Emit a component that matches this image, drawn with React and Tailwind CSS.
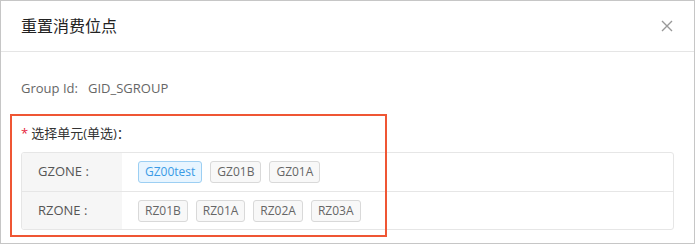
import React from "react";

const FONT = { fontFamily: '"Open Sans", "Noto Sans CJK SC", sans-serif' };

const zones = [
  { name: "GZONE", units: ["GZ00test", "GZ01B", "GZ01A"], active: "GZ00test" },
  { name: "RZONE", units: ["RZ01B", "RZ01A", "RZ02A", "RZ03A"] },
];

export default function App() {
  return (
    <div className="h-[245px] w-[695px] bg-white" style={FONT}>
      <div className="h-[244px] w-[695px] border border-[#c6c6c6] bg-white">
        {/* header */}
        <div className="flex h-[51px] items-center justify-between border-b border-[#e5e5e5] pl-[20px] pr-[21px]">
          <h1 className="text-[16px] text-[#222]">重置消费位点</h1>
          <svg width="12" height="12" viewBox="0 0 12 12" className="text-[#999]">
            <path d="M1 1 L11 11 M11 1 L1 11" stroke="currentColor" strokeWidth="1.4" />
          </svg>
        </div>

        {/* body */}
        <div className="relative pl-[20px] pr-[20px] pt-[27px]">
          <div className="text-[13px] leading-[18px] text-[#666]">
            Group Id:&nbsp;&nbsp; GID_SGROUP
          </div>

          <div className="mt-[27px] flex items-center text-[13px] leading-[18px] text-[#333]">
            <span className="mr-[3px] text-[#e6243c]">*</span>
            <span>选择单元(单选)：</span>
          </div>

          <div className="mt-[10px] overflow-hidden rounded-[3px] border border-[#e6e6e6]">
            {zones.map((z, i) => (
              <div
                key={z.name}
                className={`flex h-[38px] ${i > 0 ? "border-t border-[#e6e6e6]" : ""}`}
              >
                <div className="flex w-[100px] items-center bg-[#f6f6f6] pl-[16px] text-[13px] text-[#555]">
                  {z.name} :
                </div>
                <div className="flex items-center gap-[8px] pl-[16px]">
                  {z.units.map((u) => (
                    <span
                      key={u}
                      className={
                        u === z.active
                          ? "flex h-[22px] items-center rounded-[3px] border border-[#9ccff3] bg-[#e8f5ff] px-[6px] text-[12px] text-[#3a9be6]"
                          : "flex h-[22px] items-center rounded-[3px] border border-[#d9d9d9] bg-[#f8f8f8] px-[6px] text-[12px] text-[#666]"
                      }
                    >
                      {u}
                    </span>
                  ))}
                </div>
              </div>
            ))}
          </div>

          {/* highlight annotation drawn over the content */}
          <div className="pointer-events-none absolute left-[9px] top-[62px] h-[123px] w-[377px] border-2 border-[#ef5634]" />
        </div>
      </div>
    </div>
  );
}
